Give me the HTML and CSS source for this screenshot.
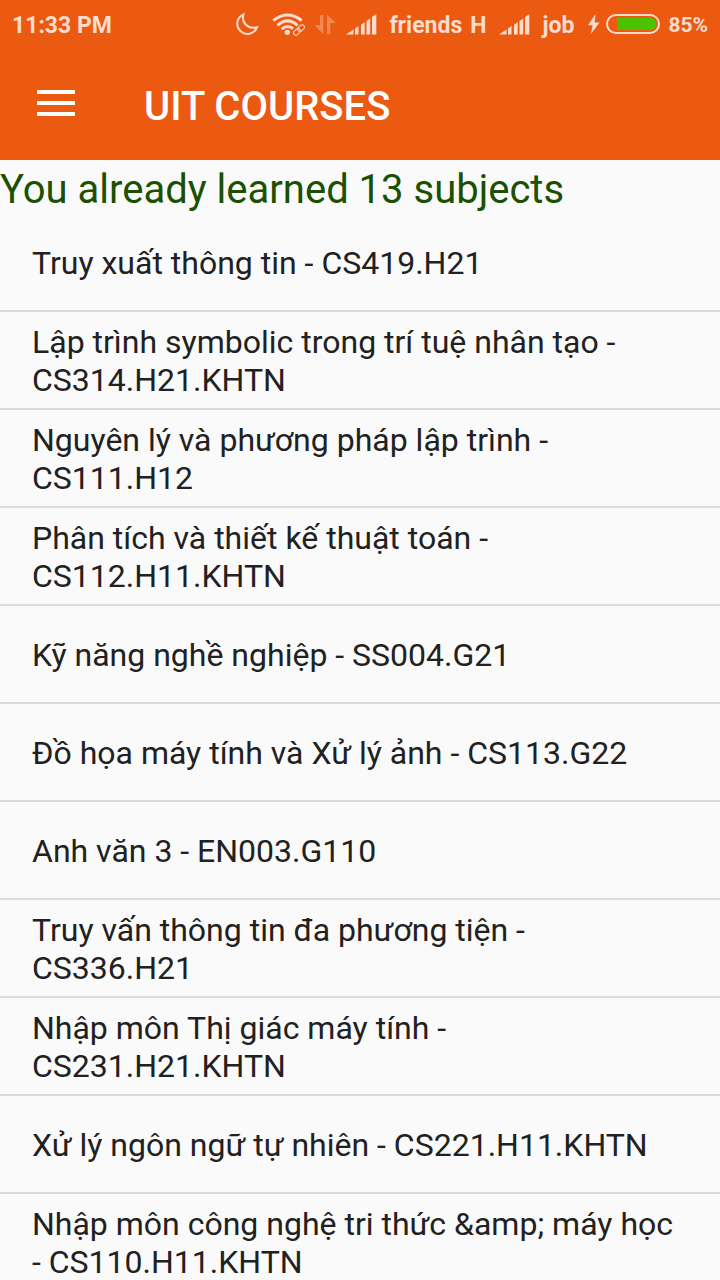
FILE: index.html
```html
<!DOCTYPE html>
<html lang="vi">
<head>
  <meta charset="utf-8">
  <meta name="viewport" content="width=device-width, initial-scale=1">
  <title>UIT Courses</title>
  <link rel="stylesheet" href="styles.css">
</head>
<body>
  <div class="screen">
    <header class="header">
      <div class="status">
        <span class="status-text status-time">11:33 PM</span>
        <svg class="icon" width="34" height="48" viewBox="0 0 34 48" aria-hidden="true">
          <path class="line" d="M10.5 14.3A10.2 10.2 0 1 0 24 27.3C15 29.500 8 22.500 10.500 14.300Z"/>
        </svg>
        <svg class="icon" width="36" height="48" viewBox="0 0 36 48" aria-hidden="true">
          <path class="arc" d="M2.300 20.500Q16.500 9.500 30.700 20.500M6.500 25.300Q16.500 16.500 26.500 25.300M10.700 29.200Q16.500 24 22 28.600"/>
          <circle class="fill" cx="16.300" cy="32.300" r="2.600"/>
          <g class="link" transform="rotate(-42 28 30)">
            <rect x="21.500" y="27.700" width="7.500" height="4.600" rx="2.300"/>
            <rect x="27" y="27.700" width="7.500" height="4.600" rx="2.300"/>
          </g>
        </svg>
        <svg class="icon" width="26" height="48" viewBox="0 0 26 48" aria-hidden="true">
          <path class="fill dim" d="M9 15H12.300V34.300L4 25.300H9ZM16 34V14.300L24.600 23H19.300V34Z"/>
        </svg>
        <svg class="icon" width="44" height="48" viewBox="0 0 44 48" aria-hidden="true">
          <path class="fill" d="M5 34.600L12.500 29.500V34.600ZM14 28.500L17.500 26V34.600H14ZM20 24.800L23.700 22.300V34.600H20ZM25.500 21L29.200 18.500V34.600H25.500ZM31 17L35.300 14.200V34.600H31Z"/>
        </svg>
        <span class="status-text status-label">friends</span>
        <span class="status-text status-label">H</span>
        <svg class="icon" width="44" height="48" viewBox="0 0 44 48" aria-hidden="true">
          <path class="fill" d="M5 34.600L12.500 29.500V34.600ZM14 28.500L17.500 26V34.600H14ZM20 24.800L23.700 22.300V34.600H20ZM25.500 21L29.200 18.500V34.600H25.500ZM31 17L35.300 14.200V34.600H31Z"/>
        </svg>
        <span class="status-text status-label">job</span>
        <svg class="icon" width="20" height="48" viewBox="0 0 20 48" aria-hidden="true">
          <path class="fill" d="M13.500 14L6 25.300H10.700L8.700 34.300L17.500 22.500H12.700Z"/>
        </svg>
        <svg class="icon" width="58" height="48" viewBox="0 0 58 48" aria-hidden="true">
          <rect class="line" x="1" y="15" width="52" height="18" rx="9"/>
          <path class="charge" d="M11 18H44.500A6 6 0 0 1 44.500 30H11Z"/>
        </svg>
        <span class="status-text status-percent">85%</span>
      </div>
      <div class="toolbar">
        <button class="menu" type="button" aria-label="Open menu">
          <svg class="icon" width="38" height="26" viewBox="0 0 38 26" aria-hidden="true">
            <path fill="#fff" d="M0 0H38V4H0ZM0 11H38V15H0ZM0 22H38V26H0Z"/>
          </svg>
        </button>
        <h1 class="title">UIT COURSES</h1>
      </div>
    </header>
    <main class="content">
      <p class="summary">You already learned 13 subjects</p>
      <ul class="courses">
        <li class="course">Truy xuất thông tin - CS419.H21</li>
        <li class="course">Lập trình symbolic trong trí tuệ nhân tạo - CS314.H21.KHTN</li>
        <li class="course">Nguyên lý và phương pháp lập trình - CS111.H12</li>
        <li class="course">Phân tích và thiết kế thuật toán - CS112.H11.KHTN</li>
        <li class="course">Kỹ năng nghề nghiệp - SS004.G21</li>
        <li class="course">Đồ họa máy tính và Xử lý ảnh - CS113.G22</li>
        <li class="course">Anh văn 3 - EN003.G110</li>
        <li class="course">Truy vấn thông tin đa phương tiện - CS336.H21</li>
        <li class="course">Nhập môn Thị giác máy tính - CS231.H21.KHTN</li>
        <li class="course">Xử lý ngôn ngữ tự nhiên - CS221.H11.KHTN</li>
        <li class="course">Nhập môn công nghệ tri thức &amp;amp; máy học - CS110.H11.KHTN</li>
      </ul>
    </main>
  </div>
</body>
</html>
```
FILE: styles.css
```css
* {
  box-sizing: border-box;
}

body {
  margin: 0;
  background: #fafafa;
  color: #212121;
  font-family: Roboto, "Noto Sans", sans-serif;
}

.screen {
  display: flex;
  flex-direction: column;
  height: 100vh;
}

.header {
  flex: none;
  background: #ec5910;
}

.status {
  display: flex;
  align-items: center;
  gap: 4px;
  height: 48px;
  padding: 0 12px;
  color: #fbdccd;
  font-size: 23px;
  font-weight: 700;
  white-space: nowrap;
}

.status-text {
  padding-top: 2px;
}

.status-time {
  margin-right: auto;
}

.status-label {
  margin-right: 4px;
}

.status-percent {
  font-size: 21px;
}

.icon {
  display: block;
  flex: none;
}

.fill {
  fill: #fbdccd;
}

.dim {
  opacity: 0.35;
}

.line,
.arc,
.link {
  fill: none;
  stroke: #fbdccd;
  stroke-width: 2;
}

.arc {
  stroke-width: 3;
}

.link {
  stroke-width: 1;
}

.charge {
  fill: #4cc200;
}

.toolbar {
  display: flex;
  align-items: center;
  gap: 53px;
  height: 112px;
  padding: 0 21px 2px;
}

.menu {
  padding: 16px;
  border: 0;
  background: none;
}

.title {
  margin: 0;
  padding-top: 6px;
  color: #fff;
  font-size: 40px;
  font-weight: 500;
}

.content {
  flex: 1;
  min-height: 0;
  overflow-y: auto;
  scrollbar-width: none;
}

.summary {
  margin: 0;
  padding-top: 6px;
  color: #1b5000;
  font-size: 40px;
  line-height: 48px;
}

.courses {
  margin: 0;
  padding: 0;
  list-style: none;
}

.course {
  display: flex;
  align-items: center;
  min-height: 98px;
  padding: 11px 32px 9px;
  border-bottom: 2px solid #dadada;
  font-size: 32px;
  line-height: 38px;
}
```
